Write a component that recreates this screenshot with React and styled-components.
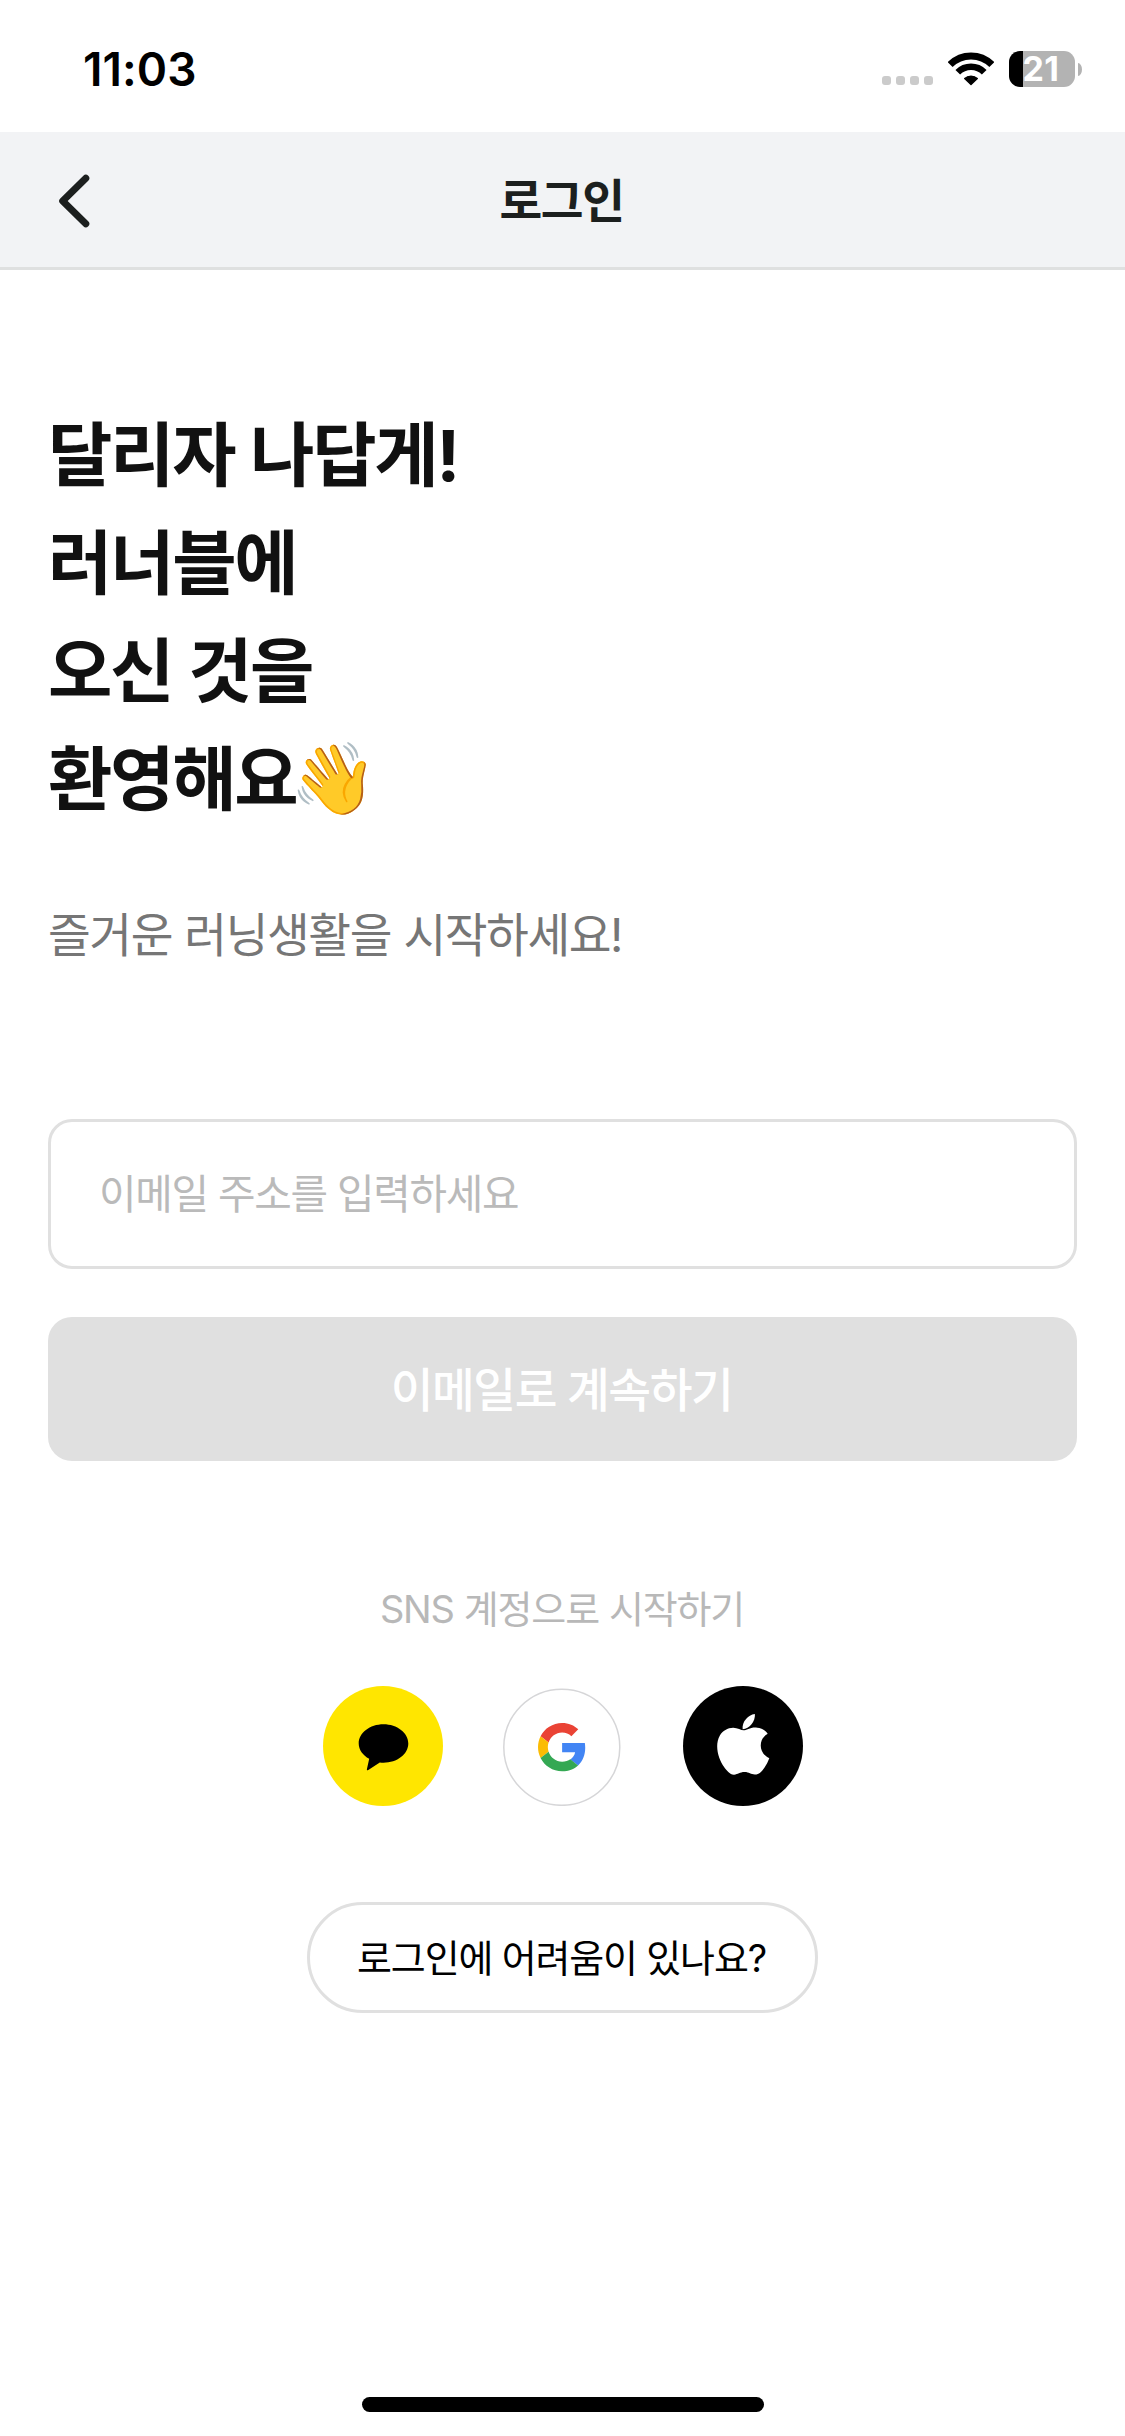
import React from "react";
import styled, { createGlobalStyle } from "styled-components";

const GlobalStyle = createGlobalStyle`
  *, *::before, *::after { box-sizing: border-box; letter-spacing: -0.031em; }
  body {
    margin: 0;
    background: #fff;
    color: #111;
    font-family: "Inter", "Noto Sans CJK KR", sans-serif;
  }
  h1, p { margin: 0; }
  button, input { font: inherit; }
  button { padding: 0; border: 0; background: none; cursor: pointer; }
  svg { display: block; }
`;

const Screen = styled.div`
  display: flex;
  flex-direction: column;
  width: 1125px;
  height: 2436px;
  background: #fff;
`;

const StatusBar = styled.div`
  display: flex;
  align-items: center;
  justify-content: space-between;
  flex: none;
  height: 132px;
  padding: 6px 43px 0 83px;
`;

const Clock = styled.time`
  font-size: 46px;
  font-weight: 600;
  line-height: 56px;
  letter-spacing: 0.1px;
  color: #000;
`;

const StatusIcons = styled.div`
  display: flex;
  align-items: center;
  height: 36px;
`;

const SignalDots = styled.div`
  display: flex;
  gap: 5px;
  align-self: flex-end;
  margin: 0 15px 2px 0;
`;

const Dot = styled.span`
  width: 9px;
  height: 9px;
  border-radius: 3px;
  background: #cbcbcb;
`;

const Battery = styled.div`
  display: flex;
  align-items: center;
  justify-content: center;
  width: 66px;
  height: 36px;
  margin-left: 15px;
  padding-right: 2px;
  border-radius: 11px;
  background: linear-gradient(to right, #000 14px, #b3b3b3 14px);
  color: #fff;
  font-size: 34px;
  font-weight: 700;
  line-height: 36px;
  letter-spacing: 0.5px;
`;

const BatteryCap = styled.span`
  width: 4px;
  height: 13px;
  margin-left: 3px;
  border-radius: 0 4px 4px 0 / 0 6.5px 6.5px 0;
  background: #b3b3b3;
`;

const Header = styled.header`
  display: grid;
  grid-template-columns: 1fr auto 1fr;
  align-items: center;
  flex: none;
  height: 138px;
  padding: 3px 48px 0;
  border-bottom: 3px solid #dfe0e0;
  background: #f2f3f5;
  color: #1c1f1e;
`;

const BackButton = styled.button`
  justify-self: start;
  margin-left: 8px;
  color: inherit;
`;

const Title = styled.div`
  padding-right: 2px;
  font-size: 46.5px;
  font-weight: 700;
  line-height: 60px;
`;

const Content = styled.main`
  display: flex;
  flex-direction: column;
  padding: 132px 48px 0;
`;

const Greeting = styled.h1`
  font-size: 70px;
  font-weight: 700;
  line-height: 108px;
  letter-spacing: -2.3px;
  word-spacing: 1.5px;

  div { letter-spacing: inherit; }
`;

const Wave = styled.span`
  display: inline-block;
  margin-left: -6px;
  font-size: 70px;
  line-height: 70px;
  transform: translateY(-2px);
`;

const Subtitle = styled.p`
  margin-top: 65px;
  font-size: 46.5px;
  line-height: 72px;
  word-spacing: 0.7px;
  color: #767676;
`;

const EmailInput = styled.input`
  height: 150px;
  margin-top: 148px;
  padding: 0 48px;
  border: 3px solid #e0e0e0;
  border-radius: 24px;
  outline: none;
  background: #fff;
  font-size: 40.8px;
  color: #111;
  &::placeholder { color: #bababa; opacity: 1; }
`;

const SubmitButton = styled.button`
  height: 144px;
  margin-top: 48px;
  padding: 2px 2px 0 0;
  border-radius: 24px;
  background: #e0e0e0;
  color: #fff;
  font-size: 46.5px;
  font-weight: 500;
  line-height: 60px;
`;

const SnsLabel = styled.p`
  margin-top: 118px;
  padding-right: 1px;
  font-size: 38px;
  line-height: 60px;
  word-spacing: 0.5px;
  text-align: center;
  color: #b8b8b8;
`;

const SnsRow = styled.div`
  display: flex;
  justify-content: center;
  gap: 60px;
  margin-top: 47px;
`;

const SnsButton = styled.button`
  width: 120px;
  height: 120px;
  border-radius: 50%;
`;

const HelpButton = styled.button`
  align-self: center;
  width: 511px;
  height: 111px;
  margin-top: 96px;
  padding-right: 2px;
  border: 3px solid #e0e0e0;
  border-radius: 56px;
  color: #000;
  font-size: 38px;
  line-height: 60px;
`;

const HomeIndicator = styled.div`
  align-self: center;
  width: 402px;
  height: 15px;
  margin: auto 0 24px;
  border-radius: 8px;
  background: #000;
`;

const WifiIcon = () => (
  <svg width="46" height="34" viewBox="0 0 46 34" fill="none" stroke="#000">
    <path d="M2.14 12.64a29.5 29.5 0 0 1 41.72 0" strokeWidth="7" />
    <path d="M9.78 20.28a18.7 18.7 0 0 1 26.44 0" strokeWidth="6.6" />
    <path d="M23 32.6l-6.300-6.100a9.400 9.400 0 0 1 12.600 0z" fill="#000" strokeWidth="1.400" strokeLinejoin="round" />
  </svg>
);

const BackIcon = () => (
  <svg width="36" height="56" viewBox="0 0 36 56" fill="none" stroke="currentColor" strokeWidth="7" strokeLinecap="round" strokeLinejoin="round">
    <path d="M29.800 5.200L6.700 28 29.800 50.800" />
  </svg>
);

const KakaoIcon = () => (
  <svg width="120" height="120" viewBox="0 0 120 120">
    <circle cx="60" cy="60" r="60" fill="#ffe600" />
    <path d="M60.5 38.3c13.7 0 24.8 8.6 24.8 19.2s-11.1 19.2-24.8 19.2c-1.3 0-2.5-.1-3.700-.2L45.300 84c-.8.500-1.600.1-1.400-.8l2.300-10.400c-6.400-3.400-10.500-9-10.500-15.300 0-10.600 11.100-19.200 24.800-19.200z" />
  </svg>
);

const GoogleIcon = () => (
  <svg width="120" height="120" viewBox="0 0 120 120">
    <circle cx="58.8" cy="61.300" r="58" fill="#fff" stroke="#d6d6d8" strokeWidth="1.500" />
    <g transform="translate(35 37) scale(1.005)">
      <path fill="#EA4335" d="M24 9.5c3.540 0 6.710 1.220 9.210 3.600l6.850-6.850C35.900 2.380 30.470 0 24 0 14.620 0 6.510 5.380 2.560 13.220l7.980 6.190C12.430 13.720 17.740 9.500 24 9.500z" />
      <path fill="#4285F4" d="M46.980 24.550c0-1.570-.15-3.090-.38-4.550H24v9.020h12.940c-.58 2.960-2.260 5.480-4.780 7.180l7.730 6c4.510-4.180 7.090-10.360 7.090-17.650z" />
      <path fill="#FBBC05" d="M10.530 28.590c-.48-1.450-.76-2.990-.76-4.590s.27-3.140.76-4.590l-7.980-6.190C.92 16.460 0 20.120 0 24c0 3.880.92 7.540 2.560 10.780l7.970-6.190z" />
      <path fill="#34A853" d="M24 48c6.480 0 11.930-2.130 15.890-5.810l-7.730-6c-2.150 1.450-4.920 2.300-8.160 2.300-6.260 0-11.570-4.220-13.470-9.910l-7.980 6.190C6.510 42.620 14.620 48 24 48z" />
    </g>
  </svg>
);

const AppleIcon = () => (
  <svg width="120" height="120" viewBox="0 0 120 120">
    <circle cx="60" cy="60" r="60" />
    <g fill="#fff">
      <path transform="translate(28.250 26.500) scale(2.667 2.590)" d="M12.152 6.896c-.948 0-2.415-1.078-3.960-1.040-2.040.027-3.910 1.183-4.961 3.014-2.117 3.675-.546 9.103 1.519 12.090 1.013 1.454 2.208 3.090 3.792 3.039 1.520-.065 2.090-.987 3.935-.987 1.831 0 2.350.987 3.960.948 1.637-.026 2.676-1.480 3.676-2.948 1.156-1.688 1.636-3.325 1.662-3.415-.039-.013-3.182-1.221-3.220-4.857-.026-3.040 2.480-4.494 2.597-4.559-1.429-2.090-3.623-2.324-4.390-2.376-2-.156-3.675 1.090-4.610 1.090z" />
      <path d="M71.900 28c.6 7.500-5.500 14.800-12.300 15.200-.7-7.400 5.300-14.300 12.300-15.200z" />
    </g>
  </svg>
);

const GREETING = ["달리자 나답게!", "러너블에", "오신 것을"];

const SNS = [
  { name: "Kakao", Icon: KakaoIcon },
  { name: "Google", Icon: GoogleIcon },
  { name: "Apple", Icon: AppleIcon },
];

export default function App() {
  return (
    <>
      <GlobalStyle />
      <Screen>
        <StatusBar>
          <Clock>11:03</Clock>
          <StatusIcons>
            <SignalDots>
              {[0, 1, 2, 3].map((i) => <Dot key={i} />)}
            </SignalDots>
            <WifiIcon />
            <Battery>21</Battery>
            <BatteryCap />
          </StatusIcons>
        </StatusBar>
        <Header>
          <BackButton type="button"><BackIcon /></BackButton>
          <Title>로그인</Title>
        </Header>
        <Content>
          <Greeting>
            {GREETING.map((line) => <div key={line}>{line}</div>)}
            <div>환영해요<Wave>👋</Wave></div>
          </Greeting>
          <Subtitle>즐거운 러닝생활을 시작하세요!</Subtitle>
          <EmailInput type="email" placeholder="이메일 주소를 입력하세요" />
          <SubmitButton type="button">이메일로 계속하기</SubmitButton>
          <SnsLabel>SNS 계정으로 시작하기</SnsLabel>
          <SnsRow>
            {SNS.map(({ name, Icon }) => (
              <SnsButton key={name} type="button"><Icon /></SnsButton>
            ))}
          </SnsRow>
          <HelpButton type="button">로그인에 어려움이 있나요?</HelpButton>
        </Content>
        <HomeIndicator />
      </Screen>
    </>
  );
}
